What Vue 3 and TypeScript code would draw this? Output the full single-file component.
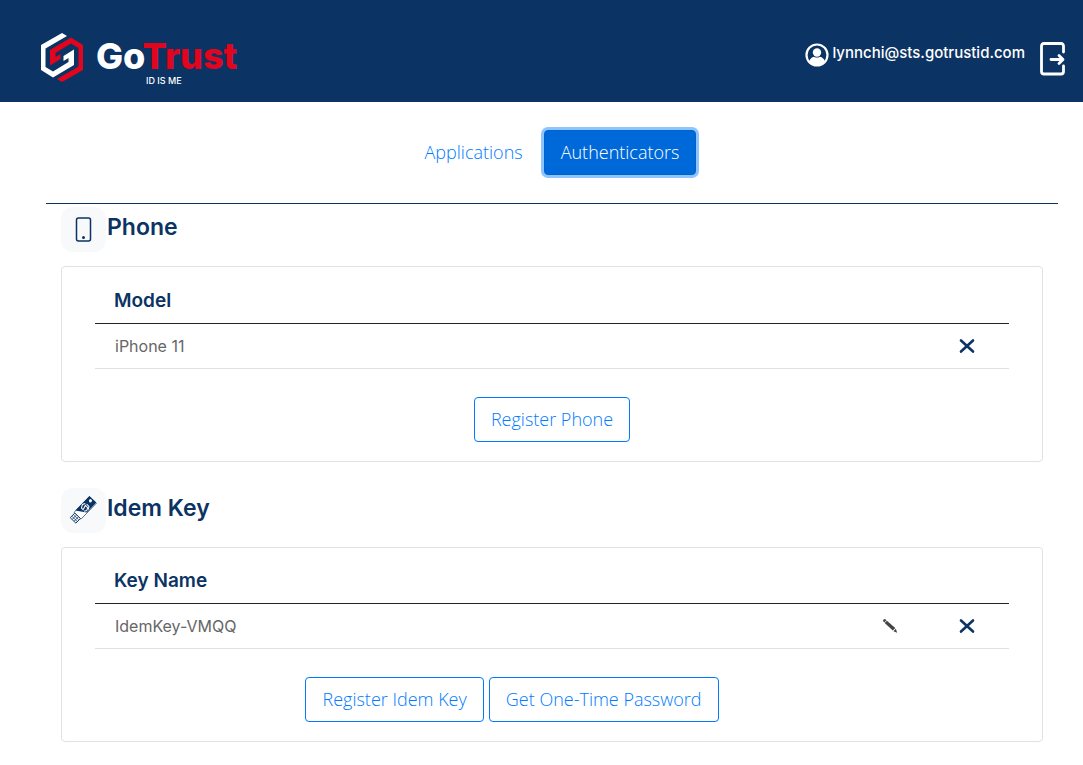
<script setup lang="ts">
import { ref } from 'vue'

interface Authenticator {
  id: string
  title: string
  icon: 'phone' | 'key'
  column: string
  items: { name: string; editable: boolean }[]
  actions: string[]
}

const tabs = ['Applications', 'Authenticators']
const active = ref('Authenticators')

const groups: Authenticator[] = [
  {
    id: 'phone',
    title: 'Phone',
    icon: 'phone',
    column: 'Model',
    items: [{ name: 'iPhone 11', editable: false }],
    actions: ['Register Phone'],
  },
  {
    id: 'key',
    title: 'Idem Key',
    icon: 'key',
    column: 'Key Name',
    items: [{ name: 'IdemKey-VMQQ', editable: true }],
    actions: ['Register Idem Key', 'Get One-Time Password'],
  },
]
</script>

<template>
  <div class="page">
    <header class="header">
      <a class="brand" href="#" aria-label="GoTrust, ID is me">
        <svg class="mark" viewBox="0 -1 44 50" aria-hidden="true">
          <path fill="#fff" d="M22 0 27 3 5.500 15.500V34L13 38.500 28.500 29V25L23.500 28V23L34 16.500V32L13 44.500 1 37V12Z" />
          <path fill="#e1051e" transform="rotate(180 22 24.500)" d="M22 0 27 3 5.500 15.500V34L13 38.500 28.500 29V25L23.500 28V23L34 16.500V32L13 44.500 1 37V12Z" />
        </svg>
        <span class="wordmark">
          <span class="name">Go<span class="red">Trust</span></span>
          <span class="tagline">ID IS ME</span>
        </span>
      </a>
      <div class="account">
        <svg class="avatar" viewBox="0 0 24 24" aria-hidden="true">
          <circle cx="12" cy="12" r="10.500" fill="none" stroke="#fff" stroke-width="2.200" />
          <circle cx="12" cy="9.500" r="4.200" fill="#fff" />
          <path fill="#fff" d="M4 18.500C5.500 15 8 13.800 9 13.700Q12 15.500 15 13.700C17 14 19 15.500 20 18.500Q17 22.500 12 22.500T4 18.500Z" />
        </svg>
        <span class="email">lynnchi@sts.gotrustid.com</span>
        <button class="logout" type="button" aria-label="Log out">
          <svg viewBox="0 0 28 36" aria-hidden="true">
            <path d="M24.500 11V5Q24.500 2.500 22 2.500H5Q2.500 2.500 2.500 5V30.500Q2.500 33 5 33H22Q24.500 33 24.500 30.500V25M12 18.500H23M20 14.500 24 18.500 20 22.500" fill="none" stroke="#fff" stroke-width="2.800" stroke-linecap="round" stroke-linejoin="round" />
          </svg>
        </button>
      </div>
    </header>

    <main class="content">
      <nav class="tabs">
        <button
          v-for="tab in tabs"
          :key="tab"
          type="button"
          class="btn tab"
          :class="{ active: tab === active }"
          @click="active = tab"
        >{{ tab }}</button>
      </nav>

      <section v-for="g in groups" :key="g.id" class="group">
        <h2 class="title">
          <span class="tile">
            <svg v-if="g.icon === 'phone'" viewBox="0 0 45 45" aria-hidden="true">
              <rect x="15.500" y="11" width="14" height="23" rx="2" fill="none" stroke="#0b3363" stroke-width="1.500" />
              <circle cx="22.500" cy="30.500" r="1.500" fill="#0b3363" />
            </svg>
            <svg v-else viewBox="0 0 45 45" aria-hidden="true">
              <g transform="translate(22 21.800) rotate(-46) scale(.92) translate(-22.300 -22.500)">
                <path fill="#fff" stroke="#0b3363" stroke-width=".7" d="M13.500 17.500H37.500V28H13.500Z" />
                <path fill="#0b3363" d="M16 17H38V27.500H23Z" />
                <path fill="#fff" stroke="#0b3363" d="M6.500 18.500H13.500V27H6.500Z" />
                <path d="M8.800 19V26.500M11.200 19V26.500M7 21.300H13M7 24.200H13" fill="none" stroke="#0b3363" stroke-width=".8" />
                <circle cx="35" cy="21.500" r="1.700" fill="#fff" />
                <path d="M29 19.500 26 18 22.500 20V22.500L27.500 21V24.500L24.500 26 22 24.500M29.500 21V24.500L26.500 26.500" fill="none" stroke="#fff" stroke-width="1.100" />
              </g>
            </svg>
          </span>
          {{ g.title }}
        </h2>
        <div class="card">
          <table class="list">
            <thead>
              <tr>
                <th scope="col">{{ g.column }}</th>
                <th class="tool" aria-label="Edit"></th>
                <th class="tool" aria-label="Remove"></th>
              </tr>
            </thead>
            <tbody>
              <tr v-for="item in g.items" :key="item.name">
                <td>{{ item.name }}</td>
                <td class="tool">
                  <button v-if="item.editable" class="icon" type="button" aria-label="Edit">
                    <svg viewBox="0 0 16 16" aria-hidden="true">
                      <path fill="#444" d="M1 3Q1 1 3 1L4.500 2.200 2.200 4.500ZM4.900 2.700 13.300 10 10.800 12.500 2.700 4.900ZM13.800 10.800 15.200 14.800 11.400 13.200Z" />
                    </svg>
                  </button>
                </td>
                <td class="tool">
                  <button class="icon" type="button" aria-label="Remove">
                    <svg viewBox="0 0 16 16" aria-hidden="true">
                      <path d="M2 2.500 14 13.500M14 2.500 2 13.500" stroke="#0b3363" stroke-width="2.600" stroke-linecap="round" />
                    </svg>
                  </button>
                </td>
              </tr>
            </tbody>
          </table>
          <div class="actions" :class="{ shifted: g.actions.length > 1 }">
            <button v-for="a in g.actions" :key="a" class="btn outline" type="button">{{ a }}</button>
          </div>
        </div>
      </section>
    </main>
  </div>
</template>

<style>
body {
  margin: 0;
  background: #fff;
}
</style>

<style scoped>
.page {
  font-family: Inter, "Liberation Sans", sans-serif;
  color: #0b3363;
}
.page *,
.page *::before {
  box-sizing: border-box;
}
.header {
  display: flex;
  justify-content: space-between;
  align-items: center;
  height: 102px;
  padding: 16px 16px 0 40px;
  background: #0b3363;
  color: #fff;
}
.brand {
  display: flex;
  gap: 12px;
  color: #fff;
  text-decoration: none;
}
.mark {
  width: 44px;
  height: 50px;
}
.wordmark {
  display: flex;
  flex-direction: column;
  padding-top: 4px;
}
.name {
  font: 800 36px/40px Inter, sans-serif;
}
.red {
  color: #e1051e;
}
.tagline {
  padding-left: 50px;
  font: 500 9px/10px Inter, sans-serif;
}
.account {
  display: flex;
  align-items: center;
}
.avatar {
  width: 24px;
  height: 24px;
  margin: 0 3px 8px 0;
}
.email {
  margin-bottom: 12px;
  font: 500 15px/20px Inter, sans-serif;
}
.logout {
  width: 28px;
  height: 36px;
  margin-left: 14px;
  padding: 0;
  border: 0;
  background: none;
}
.logout svg,
.icon svg,
.tile svg {
  display: block;
  width: 100%;
  height: 100%;
}
.content {
  margin: 0 25px 0 46px;
}
.tabs {
  display: flex;
  justify-content: center;
  gap: 4px;
  padding: 28px 0;
  border-bottom: 1px solid #0b3363;
}
.btn {
  height: 45px;
  padding: 0 16px;
  border: 1px solid transparent;
  border-radius: 4px;
  background: none;
  color: #007bff;
  font: 300 18px/27px "Open Sans", "Noto Sans", sans-serif;
  white-space: nowrap;
}
.tab.active {
  background: #0069d9;
  border-color: #0062cc;
  color: #fff;
  box-shadow: 0 0 0 3px #8fc5ff;
}
.outline {
  border-color: #007bff;
}
.group {
  padding: 3px 15px 0;
  margin-bottom: 23px;
}
.title {
  display: flex;
  margin: 0 0 14px;
  gap: 1px;
  font: 600 23px/41px Inter, sans-serif;
}
.tile {
  width: 45px;
  height: 45px;
  border-radius: 12px;
  background: #f8f9fb;
}
.card {
  padding: 10px 33px 19px;
  border: 1px solid #dee2e6;
  border-radius: 4px;
}
.list {
  width: 100%;
  border-collapse: collapse;
  table-layout: fixed;
}
.list th {
  height: 46px;
  padding: 2px 19px 0;
  border-bottom: 1px solid #212529;
  text-align: left;
  font: 600 19px/24px Inter, sans-serif;
}
.list td {
  height: 45px;
  padding: 0 20px;
  border-bottom: 1px solid #dee2e6;
  color: #666;
  font: 400 16px/20px Inter, sans-serif;
}
.list .tool {
  width: 70px;
  padding: 0;
  text-align: center;
}
.list .tool:last-child {
  width: 84px;
}
.icon {
  display: block;
  width: 16px;
  height: 16px;
  margin: 0 auto;
  padding: 0;
  border: 0;
  background: none;
}
.actions {
  display: flex;
  justify-content: center;
  gap: 5px;
  padding-top: 28px;
}
.shifted {
  padding-right: 80px;
}
</style>
